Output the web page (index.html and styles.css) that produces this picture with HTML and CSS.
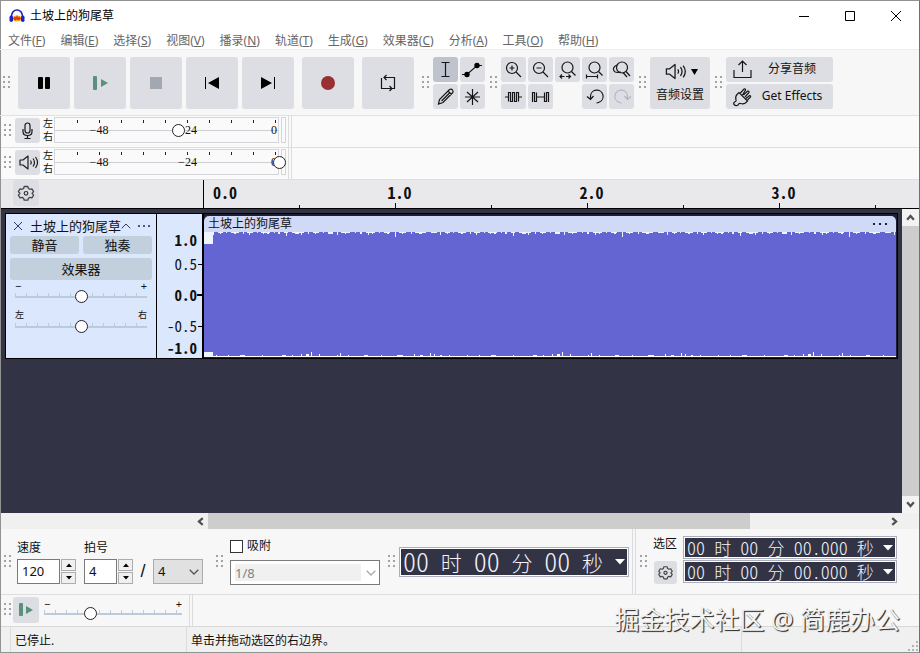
FILE: index.html
```html
<!DOCTYPE html>
<html lang="zh-CN">
<head>
<meta charset="utf-8">
<title>土坡上的狗尾草</title>
<link rel="stylesheet" href="styles.css">
</head>
<body>
<svg class="defs" width="0" height="0" aria-hidden="true">
  <defs>
    <symbol id="grip" viewBox="0 0 7 13"><path d="M0 0h2v2H0zM5 0h2v2H5zM0 5h2v2H0zM5 5h2v2H5zM0 10h2v2H0zM5 10h2v2H5z" fill="#a2a2a6"/></symbol>
    <symbol id="gear" viewBox="0 0 26 26"><path d="M11.200 6.500h3.600l.6 2 1.400.8 2.100-.5 1.700 2.800-1.500 1.700 1.500 1.800-1.700 2.800-2.100-.5-1.400.8-.6 2h-3.600l-.6-2-1.400-.8-2.100.5-1.700-2.800 1.500-1.800-1.500-1.700 1.700-2.800 2.100.5 1.400-.8z" fill="none" stroke="#444" stroke-width="1.300" stroke-linejoin="round"/><circle cx="13" cy="13.300" r="1.800" fill="none" stroke="#333" stroke-width="1.200"/></symbol>
    <symbol id="speaker" viewBox="0 0 25 25"><path d="M5 10h3l5-4v13l-5-4H5zM15.500 10.500q1.500 2 0 4M18 8.500q3 4 0 8M20.500 7q4 5.500 0 11" fill="none" stroke="#1c1c1c" stroke-width="1.200" stroke-linejoin="round"/></symbol>
    <symbol id="chevron" viewBox="0 0 10 6"><path d="M.7.700 5 5 9.300.700" fill="none" stroke="currentColor" stroke-width="1.300"/></symbol>
    <symbol id="arrow" viewBox="0 0 8 8"><path d="M1 6l3-3.400L7 6" fill="none" stroke="#505050" stroke-width="2"/></symbol>
    <symbol id="spin" viewBox="0 0 6 4"><path d="M0 4 3 .5 6 4z"/></symbol>
    <symbol id="drop" viewBox="0 0 10 6"><path d="M0 0h10L5 5.500z"/></symbol>
  </defs>
</svg>
<div class="window">
  <header class="titlebar">
    <svg class="logo" viewBox="0 0 16 16"><path d="M2.500 9V8a5.500 6 0 0 1 11 0v1" fill="none" stroke="#1c24c4" stroke-width="1.700"/><ellipse cx="8" cy="10.500" rx="4.500" ry="3" fill="#f6b51c"/><path d="M4 10.500 6 8.500l1 1L8 7l1.200 2.500 1-1L12 10.500 10 12.500 8 11.500l-2 1z" fill="#e5361d"/><rect x=".5" y="7.500" width="3.500" height="6.500" rx="1.700" fill="#1c24c4"/><rect x="12" y="7.500" width="3.500" height="6.500" rx="1.700" fill="#1c24c4"/></svg>
    <h1>土坡上的狗尾草</h1>
    <div class="controls">
      <button aria-label="最小化"><svg viewBox="0 0 12 12"><path d="M1 6.500h10"/></svg></button>
      <button aria-label="最大化"><svg viewBox="0 0 12 12"><path d="M1.500 1.500h9v9h-9z"/></svg></button>
      <button aria-label="关闭"><svg viewBox="0 0 12 12"><path d="M1 1l10 10M11 1 1 11"/></svg></button>
    </div>
  </header>
  <nav class="menu">
    <a href="#">文件(<u>F</u>)</a><a href="#">编辑(<u>E</u>)</a><a href="#">选择(<u>S</u>)</a><a href="#">视图(<u>V</u>)</a><a href="#">播录(<u>N</u>)</a><a href="#">轨道(<u>T</u>)</a><a href="#">生成(<u>G</u>)</a><a href="#">效果器(<u>C</u>)</a><a href="#">分析(<u>A</u>)</a><a href="#">工具(<u>O</u>)</a><a href="#">帮助(<u>H</u>)</a>
  </nav>

  <div class="toolbar">
    <svg class="grip"><use href="#grip"/></svg>
    <div class="transport">
      <button class="btn big" aria-label="暂停"><svg viewBox="0 0 52 52"><rect x="20" y="20" width="5" height="12" rx="1"/><rect x="27" y="20" width="5" height="12" rx="1"/></svg></button>
      <button class="btn big" aria-label="播放"><svg viewBox="0 0 52 52" fill="#5b907d"><rect x="19" y="19" width="4" height="14" rx="1"/><path d="M27 22l7 4-7 4z"/></svg></button>
      <button class="btn big" aria-label="停止"><svg viewBox="0 0 52 52"><path d="M20 20h12v12H20z" fill="#a3a7af"/></svg></button>
      <button class="btn big" aria-label="跳到开头"><svg viewBox="0 0 52 52"><path d="M19 20h1v12h-1zM33 20v12l-11-6z"/></svg></button>
      <button class="btn big" aria-label="跳到末尾"><svg viewBox="0 0 52 52"><path d="M19 20v12l11-6zM32 20h1v12h-1z"/></svg></button>
    </div>
    <button class="btn big" aria-label="录制"><svg viewBox="0 0 52 52"><circle cx="26" cy="26" r="7" fill="#982f33"/></svg></button>
    <button class="btn big" aria-label="循环"><svg viewBox="0 0 52 52"><path class="line" d="M22 20.500h10.500v11h-2M24.500 18l-2.500 2.500 2.500 2.500M19.500 21v10.500H30M27.500 29l2.500 2.500-2.500 2.500"/></svg></button>
    <svg class="grip"><use href="#grip"/></svg>
    <div class="tools two">
      <button class="btn small on" aria-label="选择工具"><svg viewBox="0 0 25 25"><path class="line" d="M8.500 5.500h8M8.500 19.500h8M12.500 5.500v14"/></svg></button>
      <button class="btn small" aria-label="包络工具"><svg viewBox="0 0 25 25"><path class="line" d="M2 17.500h5l10-9h5"/><circle cx="7" cy="17.500" r="2.700"/><circle cx="17" cy="8.500" r="2.700"/></svg></button>
      <button class="btn small" aria-label="绘制工具"><svg viewBox="0 0 25 25"><path class="line" d="M5.500 20l1-4.500L16.500 5.500q2-1 3 .5t.3 2.500L10 18.500zM15 7l3.500 3.500M8.500 17l8-8"/></svg></button>
      <button class="btn small" aria-label="多功能工具"><svg viewBox="0 0 25 25"><path class="line" d="M12.500 5v16M5 13h15M7 8l11 10M18 8 7 18"/></svg></button>
    </div>
    <svg class="grip"><use href="#grip"/></svg>
    <div class="tools five">
      <button class="btn small" aria-label="放大"><svg viewBox="0 0 25 25"><circle class="line" cx="11" cy="11" r="5.500"/><path class="line" d="M15 15l5 5M8.500 11h5M11 8.500v5"/></svg></button>
      <button class="btn small" aria-label="缩小"><svg viewBox="0 0 25 25"><circle class="line" cx="11" cy="11" r="5.500"/><path class="line" d="M15 15l5 5M8.500 11h5"/></svg></button>
      <button class="btn small" aria-label="适应选区"><svg viewBox="0 0 25 25"><circle class="line" cx="12.500" cy="10.500" r="5.500"/><path class="line" d="M16.500 14.500l4 4M5 19.500h4.500M11 19.500h4.500M7 17.500l-2 2 2 2M13.500 17.500l2 2-2 2"/></svg></button>
      <button class="btn small" aria-label="适应项目"><svg viewBox="0 0 25 25"><circle class="line" cx="12.500" cy="10.500" r="5.500"/><path class="line" d="M16.500 14.500l4 4M5 19.500h10M4.500 17.500v4M15.500 17.500v4"/></svg></button>
      <button class="btn small" aria-label="切换缩放"><svg viewBox="0 0 25 25"><circle class="line" cx="13" cy="10.500" r="5.500"/><path class="line" d="M17 14.500l4 4.500M9 7.500q-5 2-4.500 5t4.500 3q1.500 0 3-.5M14 15.500l4 4.500"/></svg></button>
      <button class="btn small" aria-label="修剪"><svg viewBox="0 0 25 25"><path class="line" d="M4 13h3.500V8.500h2v9h2v-9h2v9h2v-9h2V13H21M7.500 13v4.500M17.500 13v4.500"/></svg></button>
      <button class="btn small" aria-label="静音选区"><svg viewBox="0 0 25 25"><path class="line" d="M4.500 18V8.500h2v9h2v-9V13h8V8.500 17.500h2v-9h2v9.500M8.500 13v4.500"/></svg></button>
      <span></span>
      <button class="btn small" aria-label="撤销"><svg viewBox="0 0 25 25"><path class="line" d="M8.500 15.500v-3a6.300 6.300 0 1 1 8.500 5.800q-1.200.7-2.500.7M5 12.500l3.500 3 3-3.500"/></svg></button>
      <button class="btn small off" aria-label="重做"><svg viewBox="0 0 25 25"><path class="line" d="M18.500 15.500v-3a6.300 6.300 0 1 0-8.500 5.800q1.200.7 2.500.7M22 12.500l-3.500 3-3-3.500"/></svg></button>
    </div>
    <svg class="grip"><use href="#grip"/></svg>
    <button class="btn audio"><span class="audio-icons"><svg class="speaker"><use href="#speaker"/></svg><svg class="caret" viewBox="0 0 7 6"><path d="M0 0h7L3.500 6z"/></svg></span>音频设置</button>
    <svg class="grip"><use href="#grip"/></svg>
    <div class="share">
      <button class="btn wide"><svg viewBox="0 0 25 25"><path class="line" d="M4 13v7.500h17V13M12.500 15V4.500M8.500 8l4-4 4 4"/></svg><span>分享音频</span></button>
      <button class="btn wide"><svg viewBox="0 0 25 25"><path class="line" d="M4 20.500q-1-1 .5-2.500 2-.5 1.500-2-1-3.500 1-5.500L9 8.500l8.500 8.500-2 2q-2.500 1.500-5 .5-1.500-.5-2.500 1.500-2 1.500-4-.5zM10 9.500l4-4.500q1.500-.5 1.500 1L12.500 11M13.500 11l4-4q1.800-.2 1.500 1.500l-4 4.500M16 14.500l3.500-3q1.500 0 1 1.500L17.500 16"/></svg><span>Get Effects</span></button>
    </div>
  </div>

  <div class="meter-row">
    <svg class="grip"><use href="#grip"/></svg>
    <button class="btn small" aria-label="录音电平"><svg viewBox="0 0 25 25"><rect class="line" x="10" y="5" width="5" height="10" rx="2.500"/><path class="line" d="M8 11v2.500q0 4 4.500 4t4.500-4V11M12.500 17.500v3M9.500 20.500h6"/></svg></button>
    <div class="lr"><span>左</span><span>右</span></div>
    <div class="meter"><div class="scale"><span>−48</span><span>−24</span><span>0</span></div><input class="knob" type="range" min="0" max="100" value="54" aria-label="录音音量"></div>
    <div class="clipbox"></div>
    <div class="rowend"></div>
  </div>
  <div class="meter-row">
    <svg class="grip"><use href="#grip"/></svg>
    <button class="btn small" aria-label="播放电平"><svg><use href="#speaker"/></svg></button>
    <div class="lr"><span>左</span><span>右</span></div>
    <div class="meter"><div class="scale"><span>−48</span><span>−24</span><span>0</span></div><input class="knob" type="range" min="0" max="100" value="100" aria-label="播放音量"></div>
    <div class="clipbox"></div>
    <div class="rowend"></div>
  </div>

  <div class="ruler">
    <div class="ruler-left"><button class="btn opt" aria-label="时间轴选项"><svg><use href="#gear"/></svg></button></div>
    <div class="timeline"><span>0.0</span><span>1.0</span><span>2.0</span><span>3.0</span></div>
  </div>

  <main class="workspace">
    <div class="tracks">
      <section class="track">
        <div class="panel">
          <div class="panel-head">
            <button class="plain" aria-label="关闭轨道"><svg class="x" viewBox="0 0 10 10"><path d="M1 1l8 8M9 1 1 9"/></svg></button>
            <span class="name">土坡上的狗尾草</span>
            <button class="plain" aria-label="折叠"><svg class="up" viewBox="0 0 10 6"><path d="M.7 5.300 5 1l4.300 4.300"/></svg></button>
            <button class="plain dots" aria-label="更多"><svg class="more" viewBox="0 0 12 2"><path d="M0 0h2v2H0zM5 0h2v2H5zM10 0h2v2h-2z"/></svg></button>
          </div>
          <div class="pair"><button class="tbtn">静音</button><button class="tbtn">独奏</button></div>
          <button class="tbtn fx">效果器</button>
          <div class="fader"><div class="ends"><span>−</span><span>+</span></div><input type="range" class="slider" value="50" aria-label="增益"></div>
          <div class="fader pan"><div class="ends"><span>左</span><span>右</span></div><input type="range" class="slider" value="50" aria-label="声像"></div>
        </div>
        <div class="vruler"><b>1.0</b><span class="tick">0.5</span><b class="tick">0.0</b><span class="tick">-0.5</span><b>-1.0</b></div>
        <div class="clip">
          <div class="clip-head"><span>土坡上的狗尾草</span><svg class="more" viewBox="0 0 14 2"><path d="M0 0h2v2H0zM6 0h2v2H6zM12 0h2v2h-2z"/></svg></div>
          <svg class="wave" aria-label="波形">
            <defs>
              <pattern id="top" width="227" height="6" patternUnits="userSpaceOnUse"><path fill="#eef3ff" d="M0 0h6v1h-6zM9 0h1v3h-1zM14 0h5v1h-5zM16 0h1v2h-1zM22 0h1v1h-1zM27 0h8v1h-8zM30 0h2v2h-2zM39 0h1v2h-1zM43 0h6v1h-6zM45 0h1v3h-1zM53 0h1v1h-1zM57 0h9v1h-9zM59 0h1v2h-1zM63 0h2v2h-2zM70 0h1v1h-1zM74 0h2v2h-2zM80 0h4v1h-4zM82 0h1v4h-1zM88 0h12v1h-12zM91 0h4v2h-4zM97 0h1v3h-1zM104 0h1v2h-1zM109 0h6v1h-6zM111 0h1v2h-1zM119 0h1v1h-1zM124 0h5v2h-5zM133 0h1v3h-1zM137 0h9v1h-9zM141 0h1v2h-1zM151 0h1v1h-1zM156 0h2v2h-2zM162 0h9v1h-9zM164 0h1v3h-1zM168 0h1v2h-1zM175 0h1v1h-1zM180 0h6v1h-6zM183 0h2v2h-2zM191 0h1v5h-1zM195 0h7v1h-7zM198 0h1v2h-1zM207 0h1v2h-1zM211 0h11v1h-11zM215 0h3v2h-3z"/></pattern>
              <pattern id="bottom" y="119" width="251" height="6" patternUnits="userSpaceOnUse"><path fill="#fff" d="M0 5h251v1H0zM12 4h1v1h-1zM24 4h1v1h-1zM36 4h5v1h-5zM58 4h1v1h-1zM78 4h4v1h-4zM88 4h1v1h-1zM97 3h1v2h-1zM102 3h3v2h-3zM107 1h1v4h-1zM115 3h1v2h-1zM133 4h1v1h-1zM136 2h1v3h-1zM144 4h1v1h-1zM160 4h4v1h-4zM177 4h1v1h-1zM193 4h6v1h-6zM210 3h1v2h-1zM216 4h3v1h-3zM226 2h1v3h-1zM230 3h1v2h-1zM236 4h2v1h-2zM245 4h1v1h-1z"/></pattern>
            </defs>
            <rect width="100%" height="125" fill="#6464d3"/>
            <rect width="100%" height="6" fill="url(#top)"/>
            <rect y="119" width="100%" height="6" fill="url(#bottom)"/>
            <path d="M0 0h9v12H0zM0 120h9v5H0z" fill="#eef5ff"/>
          </svg>
        </div>
      </section>
    </div>
    <div class="vscroll"><button class="plain" aria-label="向上滚动"><svg class="arr"><use href="#arrow"/></svg></button><div class="thumb"></div><button class="plain" aria-label="向下滚动"><svg class="arr down"><use href="#arrow"/></svg></button></div>
  </main>
  <div class="hscroll"><button class="plain" aria-label="向左滚动"><svg class="arr left"><use href="#arrow"/></svg></button><div class="hspace"><div class="thumb"></div></div><button class="plain" aria-label="向右滚动"><svg class="arr right"><use href="#arrow"/></svg></button></div>

  <div class="bottom">
    <svg class="grip"><use href="#grip"/></svg>
    <div class="field tempo">
      <label for="tempo">速度</label>
      <div class="inline"><input id="tempo" class="box t1" type="text" value="120"><span class="spin"><button aria-label="增加速度"><svg><use href="#spin"/></svg></button><button aria-label="降低速度"><svg class="down"><use href="#spin"/></svg></button></span></div>
    </div>
    <div class="field">
      <label for="beats">拍号</label>
      <div class="inline"><input id="beats" class="box t2" type="text" value="4"><span class="spin"><button aria-label="增加拍数"><svg><use href="#spin"/></svg></button><button aria-label="减少拍数"><svg class="down"><use href="#spin"/></svg></button></span><span class="slash">/</span><span class="sel unit"><select aria-label="拍号分母"><option>4</option></select><svg><use href="#chevron"/></svg></span></div>
    </div>
    <svg class="grip snapgrip"><use href="#grip"/></svg>
    <div class="snap">
      <label class="check"><input type="checkbox"><span>吸附</span></label>
      <span class="sel snapsel"><select aria-label="吸附到" disabled><option>1/8</option></select><svg><use href="#chevron"/></svg></span>
    </div>
    <svg class="grip"><use href="#grip"/></svg>
    <div class="time large"><span>00</span><span class="u">时</span><span>00</span><span class="u">分</span><span>00</span><span class="u">秒</span><svg><use href="#drop"/></svg></div>
    <div class="rails"></div>
    <svg class="grip"><use href="#grip"/></svg>
    <div class="selname"><span>选区</span><button class="btn gearbtn" aria-label="选区选项"><svg><use href="#gear"/></svg></button></div>
    <div class="seltimes">
      <div class="time"><span>00</span><span class="u">时</span><span>00</span><span class="u">分</span><span>00.000</span><span class="u">秒</span><svg><use href="#drop"/></svg></div>
      <div class="time"><span>00</span><span class="u">时</span><span>00</span><span class="u">分</span><span>00.000</span><span class="u">秒</span><svg><use href="#drop"/></svg></div>
    </div>
  </div>
  <div class="speed">
    <svg class="grip"><use href="#grip"/></svg>
    <button class="btn opt" aria-label="变速播放"><svg viewBox="0 0 26 26" fill="#5b907d"><rect x="6" y="6" width="4" height="13" rx="1"/><path d="M13 9l7 4-7 4z"/></svg></button>
    <div class="fader"><div class="ends"><span>−</span><span>+</span></div><input type="range" class="slider" value="32" aria-label="播放速度"></div>
    <div class="rails"></div>
  </div>
  <footer class="status"><span class="s1">已停止.</span><span class="s2">单击并拖动选区的右边界。</span><span class="s3"></span><svg class="resize" viewBox="0 0 10 10"><path d="M8 0h2v2H8zM4 4h2v2H4zM8 4h2v2H8zM0 8h2v2H0zM4 8h2v2H4zM8 8h2v2H8z" fill="#b4b4b4"/></svg></footer>
  <div class="watermark">掘金技术社区 @ 简鹿办公</div>
</div>
</body>
</html>
```
FILE: styles.css
```css
* { box-sizing: border-box; }
body { margin: 0; font: 12px/16px "Noto Sans", "Noto Sans CJK SC", sans-serif; color: #111; }
button, input, select { font: inherit; color: inherit; margin: 0; padding: 0; }
svg { display: block; flex: none; }
.defs { position: absolute; }

.window { position: relative; display: flex; flex-direction: column; min-height: 100vh; border: 1px solid #929292; border-right-color: #707070; background: #f7f7f8; }

.titlebar { display: flex; align-items: center; height: 29px; padding-left: 8px; background: #fff; }
.logo { width: 16px; height: 16px; }
.titlebar h1 { margin: 0 auto 0 5px; font-size: 12px; font-weight: 400; line-height: 18px; color: #000; }
.controls { display: flex; }
.controls button { display: grid; place-items: center; width: 46px; height: 29px; border: 0; background: none; }
.controls svg { width: 12px; height: 12px; fill: none; stroke: #000; }

.menu { display: flex; gap: 15px; height: 19px; padding-left: 7px; background: #fff; }
.menu a { color: #666; text-decoration: none; line-height: 22px; white-space: nowrap; }

.grip { width: 7px; height: 13px; margin: 0 4px; }
.btn { display: grid; place-items: center; flex: none; border: 0; border-radius: 3px; background: #dddee3; }
.btn .line { fill: none; stroke: #161616; stroke-width: 1.200; }
.big, .big svg { width: 52px; height: 52px; }
.small, .small svg { width: 25px; height: 25px; }
.opt, .opt svg { width: 26px; height: 26px; }
.on { background: #bfc3ce; }
.off .line { stroke: #b2b6c0; }

.toolbar { display: flex; align-items: center; height: 67px; padding: 0 0 0 3px; margin-left: -1px; border-top: 1px solid #ececec; border-bottom: 1px solid #e2e2e4; }
.transport { display: flex; gap: 4px; margin-right: 8px; }
.transport + .big { margin-right: 8px; }
.toolbar > .grip { margin: 0 4px 0 5px; }
.toolbar > .big + .grip { margin-left: 8px; }
.toolbar > .grip:first-child { margin-left: 0; margin-right: 8px; }
.tools { display: grid; gap: 2px; }
.two { grid-template-columns: 25px 25px; }
.five { grid-template-columns: repeat(5, 25px); }
.audio { align-content: center; gap: 4px; width: 60px; height: 52px; padding-bottom: 2px; }
.audio-icons { display: flex; align-items: center; gap: 3px; height: 22px; padding-right: 2px; }
.audio .speaker { width: 27px; height: 27px; }
.caret { width: 7px; height: 6px; }
.share { display: grid; gap: 2px; }
.wide { display: flex; align-items: center; width: 107px; height: 25px; padding: 0 4px; }
.wide svg { width: 25px; height: 25px; }
.wide span { flex: 1; text-align: center; }

.meter-row { display: flex; align-items: center; height: 32px; padding-bottom: 3px; border-bottom: 1px solid #dedee0; background: #fafafa; }
.meter-row .grip { margin: 0 4px 0 3px; }
.lr { display: grid; margin: 0 1px 0 3px; font-size: 10px; line-height: 13px; }
.meter { position: relative; width: 225px; height: 26px; border: 1px solid #d6d6da; background: linear-gradient(#cfcfd4, #cfcfd4) 0 12px / 100% 1px no-repeat; }
.scale { display: grid; grid-template-columns: 88px 89px 1fr; height: 24px; font: 12px/24px "Liberation Serif", serif; background: repeating-linear-gradient(90deg, #222 0 1px, transparent 1px 22px) 22px 2px / 200px 3px no-repeat; }
.scale span { text-align: center; }
.scale span:last-child { text-align: right; padding-right: 1px; }
.knob { position: absolute; left: -2px; top: 6px; width: 233px; height: 13px; appearance: none; background: none; }
.slider { appearance: none; background: none; }
.knob::-webkit-slider-thumb, .slider::-webkit-slider-thumb { appearance: none; width: 13px; height: 13px; border: 1px solid #222; border-radius: 50%; background: #fff; }
.clipbox { width: 5px; height: 26px; margin-left: 2px; border: 1px solid #d6d6da; }
.rowend, .rails { align-self: stretch; width: 4px; border: solid #dcdce0; border-width: 0 1px; }
.rowend { margin: 0 0 -3px 2px; }

.ruler { display: flex; height: 29px; border-bottom: 1px solid #000; background: #e9e9eb; }
.ruler-left { width: 202px; padding-left: 12px; flex: none; }
.timeline { display: flex; flex: 1; min-width: 0; overflow: hidden; border-left: 1px solid #000; background:
  repeating-linear-gradient(90deg, transparent 0 191px, #111 191px 192px) 0 100% / 100% 5px no-repeat,
  repeating-linear-gradient(90deg, transparent 0 95px, #111 95px 96px) 0 100% / 100% 3px no-repeat; }
.timeline span { flex: none; width: 192px; padding-left: 9px; text-align: center; font: bold 16px/24px "Noto Sans CJK SC", sans-serif; font-feature-settings: "hwid"; }
.timeline span:first-child { width: 95px; text-align: left; }

.workspace { display: flex; flex: 1; min-height: 304px; background: #323344; }
.tracks { flex: 1; min-width: 0; padding: 4px; }
.track { display: flex; height: 146px; border: 1px solid #000; background: #dbe7fd; }
.panel { width: 150px; flex: none; padding: 3px 4px 0; }
.plain { display: grid; place-items: center; border: 0; background: none; }
.panel-head { display: flex; align-items: center; height: 17px; padding: 0 2px 0 3px; margin-bottom: 2px; line-height: 14px; }
.panel-head svg { fill: none; stroke: #303a66; }
.x { width: 10px; height: 10px; }
.up { width: 10px; height: 6px; }
.name { margin-left: 7px; font-size: 13px; }
.panel-head .dots { margin-left: auto; }
.panel-head .more { width: 12px; height: 2px; fill: #4a5690; stroke: none; }
.pair { display: grid; grid-template-columns: 1fr 1fr; gap: 4px; margin-bottom: 4px; }
.tbtn { height: 18px; border: 0; border-radius: 3px; background: #c2cfdc; font-size: 13px; line-height: 18px; }
.fx { width: 100%; height: 22px; }
.fader { padding: 0 5px; }
.ends { display: flex; justify-content: space-between; height: 10px; font-size: 11px; line-height: 12px; }
.pan { margin-top: 7px; }
.pan .ends { font-size: 9px; height: 10px; line-height: 10px; }
.slider { display: block; width: 100%; height: 13px; background:
  linear-gradient(#bccbdc, #bccbdc) 0 6px / 100% 2px no-repeat,
  repeating-linear-gradient(90deg, #bccbdc 0 1px, transparent 1px 11px) 0 3px / 100% 4px no-repeat; }

.vruler { display: grid; grid-template-rows: 24px 24px 38px 24px 20px; align-items: center; flex: none; width: 48px; padding: 14px 0 0; text-align: right; border: solid #000; border-width: 0 2px 0 1px; font: 15px/18px "Noto Sans CJK SC", sans-serif; font-feature-settings: "hwid"; }
.vruler > * { padding-right: 5px; }
.tick { background: linear-gradient(#000, #000) 100% 50% / 4px 1px no-repeat; }
b.tick { background-size: 5px 2px; }
.clip { flex: 1; min-width: 0; padding: 2px 1px 0 0; background: #1e2030; }
.clip-head { display: flex; align-items: center; justify-content: space-between; height: 16px; padding: 0 9px 0 4px; border-radius: 5px 5px 0 0; background: #d0d9f5; }
.clip-head .more { width: 14px; height: 2px; fill: #1a1d40; }
.wave { width: 100%; height: 125px; }

.vscroll { display: flex; flex-direction: column; width: 17px; background: #f3f3f3; }
.vscroll .plain { width: 17px; height: 17px; }
.thumb { background: #cdcdcd; }
.vscroll .thumb { flex: 1; }
.arr { width: 9px; height: 9px; }
.down { transform: rotate(180deg); }
.left { transform: rotate(-90deg); }
.right { transform: rotate(90deg); }
.hscroll { display: flex; align-items: stretch; height: 16px; padding: 0 17px 0 191px; background: #f0f0f0; }
.hscroll .plain { width: 16px; }
.hspace { flex: 1; }
.hspace .thumb { width: 80%; height: 16px; }

.bottom { display: flex; align-items: center; height: 66px; border-bottom: 1px solid #dedee0; }
.bottom > .grip { margin: 0 4px; }
.bottom > .grip:first-child { margin: 0 6px 0 3px; }
.field { display: grid; gap: 3px; }
.tempo { margin-right: 8px; }
.inline { display: flex; align-items: center; }
.box { height: 25px; padding: 0 4px; border: 1px solid #7a7a7a; background: #fff; font-size: 13px; }
.t1 { width: 43px; }
.t2 { width: 33px; }
.spin { display: grid; gap: 1px; margin-left: 1px; }
.spin button { display: grid; place-items: center; width: 15px; height: 12px; border: 1px solid #adadad; background: #f0f0f0; }
.spin svg { width: 6px; height: 4px; }
.slash { width: 20px; text-align: center; font: 18px/20px "Liberation Sans", sans-serif; }
.sel { position: relative; display: block; }
.sel select { appearance: none; display: block; width: 100%; height: 25px; padding-left: 4px; border: 1px solid #adadad; border-radius: 0; background: #e1e1e1; font-size: 13px; }
.sel svg { position: absolute; right: 4px; top: 10px; width: 10px; height: 6px; color: #555; }
.unit { width: 50px; }
.bottom > .snapgrip { margin: 0 7px 0 13px; }
.snap { display: grid; gap: 6px; width: 150px; margin-right: 4px; }
.check { display: flex; align-items: center; gap: 4px; }
.check input { appearance: none; width: 13px; height: 13px; border: 1px solid #333; background: #fff; }
.snapsel select { border-color: #7a7a7a; background: linear-gradient(#f0f0f0, #f0f0f0) 4px 3px / 126px 17px no-repeat #fff; color: #838383; opacity: 1; }
.snapsel svg { color: #aaa; }
.time { display: flex; align-items: center; justify-content: space-between; height: 23px; padding: 0 3px; border: 1px solid #abadb8; outline: 1px solid #fff; outline-offset: -2px; background: #323344; color: #f4f4fa; font: 18px/18px "Noto Sans CJK SC", sans-serif; font-weight: 300; font-feature-settings: "hwid"; }
.time span { padding-bottom: 2px; }
.time .u { padding-bottom: 0; font-size: 17px; }
.time svg { width: 10px; height: 6px; fill: #fff; }
.large { width: 230px; height: 30px; font-size: 26px; line-height: 24px; }
.large .u { font-size: 21px; }
.rails { margin-left: 3px; }
.selname { display: grid; justify-items: center; gap: 9px; margin: 0 6px 0 2px; padding-bottom: 4px; }
.gearbtn, .gearbtn svg { width: 23px; height: 23px; }
.seltimes { display: grid; gap: 1px; width: 214px; padding-bottom: 4px; }

.speed { display: flex; align-items: center; height: 32px; padding-bottom: 2px; border-bottom: 1px solid #d8d8d8; }
.speed .grip { margin: 0 2px 0 3px; }
.speed .fader { width: 148px; }
.speed .ends { height: 8px; line-height: 9px; }
.speed .rails { margin: 0 0 -2px 2px; }
.status { display: flex; align-items: stretch; height: 25px; line-height: 27px; background: #f0f0f0; }
.status span { border-left: 1px solid #dcdcdc; padding-left: 4px; }
.s1 { width: 176px; margin-left: 9px; }
.s2 { flex: 1; }
.s3 { width: 178px; }
.resize { position: absolute; right: 1px; bottom: 1px; width: 10px; height: 10px; }
.watermark { position: absolute; right: 19px; bottom: 15px; font-size: 25px; line-height: 36px; color: #f2f2f2; text-shadow: 1px 1px 1px #333, 1px 1px 0 #777; white-space: nowrap; }
```
